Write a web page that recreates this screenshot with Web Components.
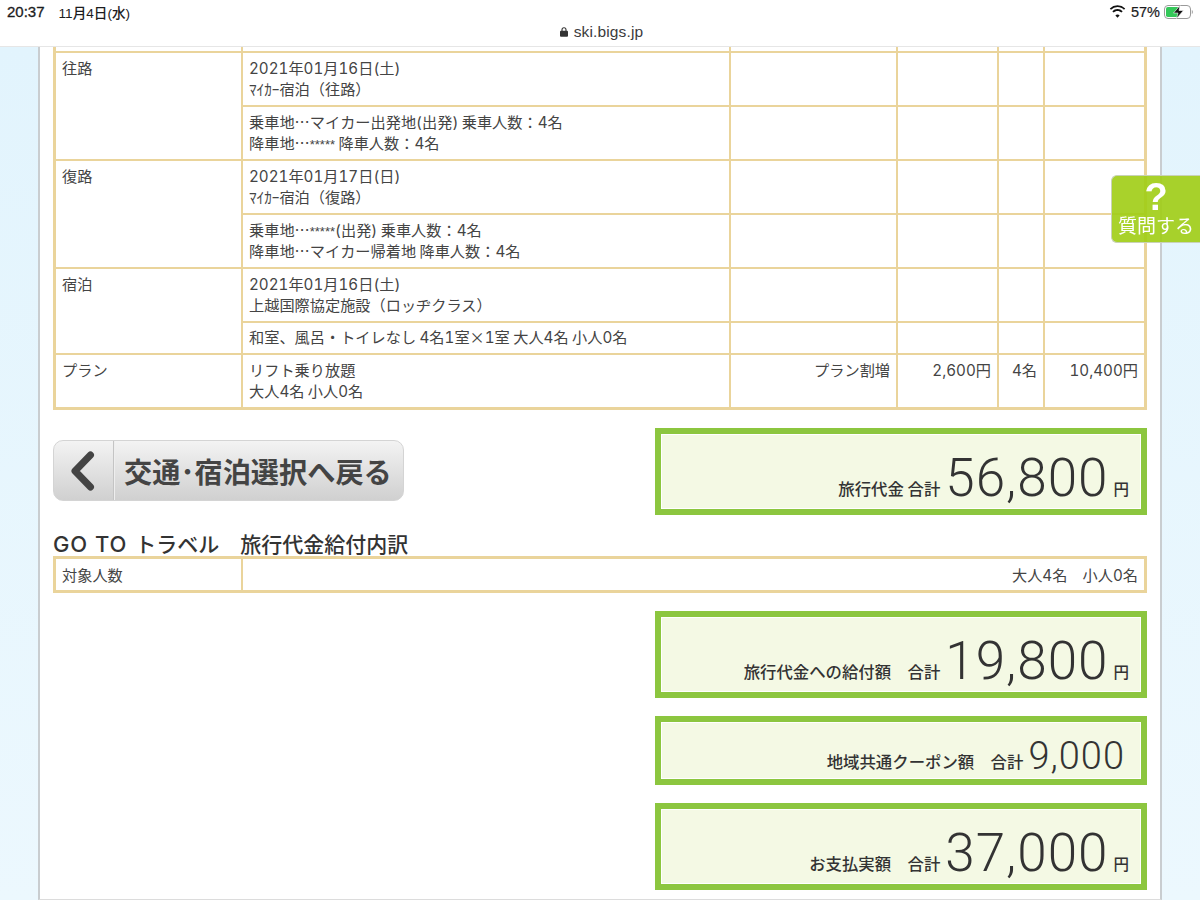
<!DOCTYPE html>
<html lang="ja"><head><meta charset="utf-8"><title>ski.bigs.jp</title>
<style>
html,body{margin:0;padding:0;height:900px;overflow:hidden;background:#fff}
body{font-family:"Noto Sans CJK JP",sans-serif;color:#444}
</style></head><body>
<ios-bar time="20:37" date="11月4日(水)" url="ski.bigs.jp" battery="57%"></ios-bar>
<page-frame>
  <detail-table></detail-table>
  <action-row>
    <back-button slot="left">交通･宿泊選択へ戻る</back-button>
    <total-box slot="right" label="旅行代金 合計" unit="円" size="53" height="87">56,800</total-box>
  </action-row>
  <section-title>トラベル　旅行代金給付内訳</section-title>
  <count-table label="対象人数" value="大人4名　小人0名"></count-table>
  <total-stack>
    <total-box label="旅行代金への給付額　合計" unit="円" size="53" height="87">19,800</total-box>
    <total-box label="地域共通クーポン額　合計" size="38" height="69">9,000</total-box>
    <total-box label="お支払実額　合計" unit="円" size="53" height="87">37,000</total-box>
  </total-stack>
</page-frame>
<ask-button>質問する</ask-button>
<script>
const css = s => `<style>${s}</style>`;
const FONT = `"Noto Sans CJK JP",sans-serif`;
const DIGITS = `.d{font-family:Inter,"Liberation Sans",sans-serif;font-style:normal;font-feature-settings:"tnum";font-weight:400;line-height:0}`;
const fmt = s => s.replace(/(<[^>]*>)|([0-9,()]+)/g, (m,tag,num) => tag ? tag : `<i class="d">${num}</i>`);
class Base extends HTMLElement{
  render(html){ this.attachShadow({mode:'open'}).innerHTML = html; }
}
customElements.define('ios-bar', class extends Base{
  connectedCallback(){
    const a = n => this.getAttribute(n);
    this.render(css(`
      :host{display:block;height:46px;background:#fff;border-bottom:1px solid #e6e6e6;font-family:"Liberation Sans","Noto Sans CJK JP",sans-serif;color:#1c1c1e}
      .top{display:flex;align-items:center;height:23px;padding:0 7px}
      .time{font-size:15px;-webkit-text-stroke:.3px #1c1c1e}
      .date{margin-left:14px;font-size:13.600px;font-weight:500}
      .right{margin-left:auto;display:flex;align-items:center}
      .pct{font-size:14.500px;margin:0 4px 0 5px;-webkit-text-stroke:.2px #1c1c1e}
      .url{display:flex;justify-content:center;align-items:center;gap:6px;height:17px;font-size:15.500px;letter-spacing:.15px;color:#3a3a3c;margin-left:3px}
    `)+`
      <div class="top"><span class="time">${a('time')}</span><span class="date">${a('date')}</span>
        <div class="right">
          <svg width="17" height="13" viewBox="0 0 17 13"><path d="M8.500 2.100c2.500 0 4.800 1 6.500 2.600l1.200-1.300A11.200 11.200 0 0 0 8.500.3 11.200 11.200 0 0 0 .8 3.400L2 4.700a9.400 9.400 0 0 1 6.500-2.600z" fill="#111"/><path d="M8.500 5.900c1.500 0 2.900.6 3.900 1.600l1.300-1.300a7.400 7.400 0 0 0-10.400 0l1.300 1.300c1-1 2.400-1.600 3.900-1.600z" fill="#111"/><path d="M8.500 9.600c-.9 0-1.500.3-2.100.8l2.100 2.300 2.100-2.300c-.6-.5-1.200-.8-2.100-.8z" fill="#111"/></svg>
          <span class="pct">${a('battery')}</span>
          <svg width="29" height="14" viewBox="0 0 29 14"><rect x=".5" y=".5" width="26" height="13" rx="3.500" fill="none" stroke="#9a9a9a"/><rect x="2" y="2" width="13" height="10" rx="1.800" fill="#34c759"/><path d="M27.800 5v4c.7-.3 1-1 1-2s-.3-1.700-1-2z" fill="#9a9a9a"/><path d="M16 .5 9.500 8H14l-1.500 5.500 7-8H15z" fill="#111" stroke="#fff" stroke-width=".6"/></svg>
        </div></div>
      <div class="url"><svg width="8" height="10" viewBox="0 0 8 10"><path d="M2 4V2.700a2 2 0 0 1 4 0V4" fill="none" stroke="#333" stroke-width="1.100"/><rect y="3.800" width="8" height="6" rx="1" fill="#333"/></svg><span>${a('url')}</span></div>`);
  }
});
customElements.define('page-frame', class extends Base{
  connectedCallback(){
    this.render(css(`
      :host{display:block;height:853px;box-sizing:border-box;padding:0 38px;background:linear-gradient(#e2f4fd,#ecf8fe)}
      .main{height:852px;background:#fff;border-left:2px solid #c9cdd0;border-right:2px solid #c9cdd0;border-bottom:1px solid #dcdcdc;padding:0 13px;width:1094px}
    `)+`<div class="main"><slot></slot></div>`);
  }
});
const cell = (html,c='')=>`<td class="${c}">${fmt(html)}</td>`;
customElements.define('detail-table', class extends Base{
  connectedCallback(){
    const empty = cell('')+cell('')+cell('')+cell('','l');
    const block = (title,a,b)=>`
      <tr><td rowspan="2">${title}</td>${cell(a)}${empty}</tr>
      <tr>${cell(b)}${empty}</tr>`;
    this.render(css(`
      :host{display:block;font-family:${FONT};color:#444;font-size:15.200px;line-height:21px}
      ${DIGITS}
      table{border-collapse:separate;border-spacing:0;table-layout:fixed;width:1094px;border:3px solid #ead49b;border-top:0;box-sizing:border-box}
      td{border-right:2px solid #ead49b;border-bottom:2px solid #ead49b;padding:4px 6px 6px;vertical-align:top;white-space:nowrap;overflow:hidden}
      td.l{border-right:0}
      tr:last-child td{border-bottom:0}
      .sp td{padding:0;height:4px;line-height:0;font-size:0}
      .r{text-align:right}
      .one td{padding:3px 6px 6px}
      .s{font-family:"Liberation Sans",sans-serif;font-size:13px;line-height:0}
    `)+`<table>
      <colgroup><col style="width:187px"><col style="width:488px"><col style="width:167px"><col style="width:101px"><col style="width:46px"><col style="width:99px"></colgroup>
      <tr class="sp">${cell('')}${cell('')}${empty}</tr>
      ${block('往路','2021年01月16日(土)<br>ﾏｲｶｰ宿泊（往路）','乗車地…マイカー出発地(出発) 乗車人数：4名<br>降車地…<span class="s">*****</span> 降車人数：4名')}
      ${block('復路','2021年01月17日(日)<br>ﾏｲｶｰ宿泊（復路）','乗車地…<span class="s">*****</span>(出発) 乗車人数：4名<br>降車地…マイカー帰着地 降車人数：4名')}
      <tr><td rowspan="2">宿泊</td>${cell('2021年01月16日(土)<br>上越国際協定施設（ロッヂクラス）')}${empty}</tr>
      <tr class="one">${cell('和室、風呂・トイレなし 4名1室×1室 大人4名 小人0名')}${empty}</tr>
      <tr><td>プラン</td>${cell('リフト乗り放題<br>大人4名 小人0名')}${cell('プラン割増','r')}${cell('2,600円','r')}${cell('4名','r')}${cell('10,400円','r l')}</tr>
    </table>`);
  }
});
customElements.define('action-row', class extends Base{
  connectedCallback(){
    this.render(css(`:host{display:flex;justify-content:space-between;align-items:flex-start;margin-top:18px}`)+`<slot name="left"></slot><slot name="right"></slot>`);
  }
});
customElements.define('back-button', class extends Base{
  connectedCallback(){
    this.render(css(`
      :host{display:flex;align-items:center;width:351px;height:61px;margin-top:12px;box-sizing:border-box;border:1px solid #d4d4d4;border-radius:10px;background:linear-gradient(#f3f3f3,#d0d0d0);font-family:${FONT};color:#444;font-weight:700;font-size:28.200px}
      .ic{width:60px;height:100%;display:flex;align-items:center;justify-content:center;border-right:1px solid #c4c4c4;box-shadow:1px 0 0 #eee;box-sizing:border-box}
      .t{padding-left:10px;white-space:nowrap}
    `)+`<div class="ic"><svg width="26" height="40" viewBox="0 0 26 40"><path d="M19.500 4 4 20 19.500 36" fill="none" stroke="#444" stroke-width="7" stroke-linecap="round" stroke-linejoin="round"/></svg></div><div class="t"><slot></slot></div>`);
  }
});
customElements.define('total-box', class extends Base{
  connectedCallback(){
    const a = n => this.getAttribute(n);
    const unit = a('unit');
    this.render(css(`
      :host{display:block;width:492px;height:${a('height')}px;box-sizing:border-box;border:6px solid #8cc63f;outline:1px solid #fff;outline-offset:-7px;background:#f4f9e4;font-family:${FONT};color:#333}
      .in{height:100%;display:flex;justify-content:flex-end;align-items:flex-end;padding:0 ${unit?12:16}px 1px 0;box-sizing:border-box;white-space:nowrap}
      .wrap{display:flex;align-items:baseline}
      .l,.u{font-size:16.400px;font-weight:500;line-height:20px}
      .u{font-size:15.500px}
      .n{font-family:Roboto,"Liberation Sans",sans-serif;font-weight:300;font-size:${a('size')}px;line-height:${+a('size')+8}px;margin:0 ${unit?5:0}px 0 5px;color:#333;letter-spacing:1px;transform:translateY(1px)}
    `)+`<div class="in"><div class="wrap"><span class="l">${a('label')}</span><span class="n"><slot></slot></span>${unit?`<span class="u">${unit}</span>`:''}</div></div>`);
  }
});
customElements.define('section-title', class extends Base{
  connectedCallback(){
    this.render(css(`
      :host{display:block;margin-top:16px;height:25px;line-height:25px;font-size:21px;font-weight:500;color:#333;font-family:${FONT};white-space:pre}
      b{font-family:Inter,"Liberation Sans",sans-serif;font-size:22px;font-weight:500;letter-spacing:.9px;margin-right:8px;color:#333;line-height:0}
    `)+`<b>GO TO</b><slot></slot>`);
  }
});
customElements.define('count-table', class extends Base{
  connectedCallback(){
    this.render(css(`
      :host{display:flex;height:37px;box-sizing:border-box;border:3px solid #ead49b;font-family:${FONT};font-size:15.200px;color:#444;line-height:31px}
      ${DIGITS}
      .a{padding-left:6px;box-sizing:border-box;border-right:2px solid #ead49b;flex:none;width:187px}
      .b{flex:1;text-align:right;padding-right:6px}
    `)+`<div class="a">${this.getAttribute('label')}</div><div class="b">${fmt(this.getAttribute('value'))}</div>`);
  }
});
customElements.define('total-stack', class extends Base{
  connectedCallback(){
    this.render(css(`:host{display:flex;flex-direction:column;align-items:flex-end;gap:18px;margin-top:18px}`)+`<slot></slot>`);
  }
});
customElements.define('ask-button', class extends Base{
  connectedCallback(){
    this.render(css(`
      :host{position:fixed;right:0;top:175px;width:89px;height:68px;box-sizing:border-box;border:1px solid #c9d2b8;border-right:0;border-radius:6px 0 0 6px;background:rgba(160,205,20,.9);color:#fff;font-family:${FONT};text-align:center}
      .q{font-family:"Liberation Sans",sans-serif;font-size:38px;font-weight:700;line-height:36px;height:34px;margin-top:3px}
      .t{font-size:19px;line-height:24px;white-space:nowrap}
    `)+`<div class="q">?</div><div class="t"><slot></slot></div>`);
  }
});
</script>
</body></html>
